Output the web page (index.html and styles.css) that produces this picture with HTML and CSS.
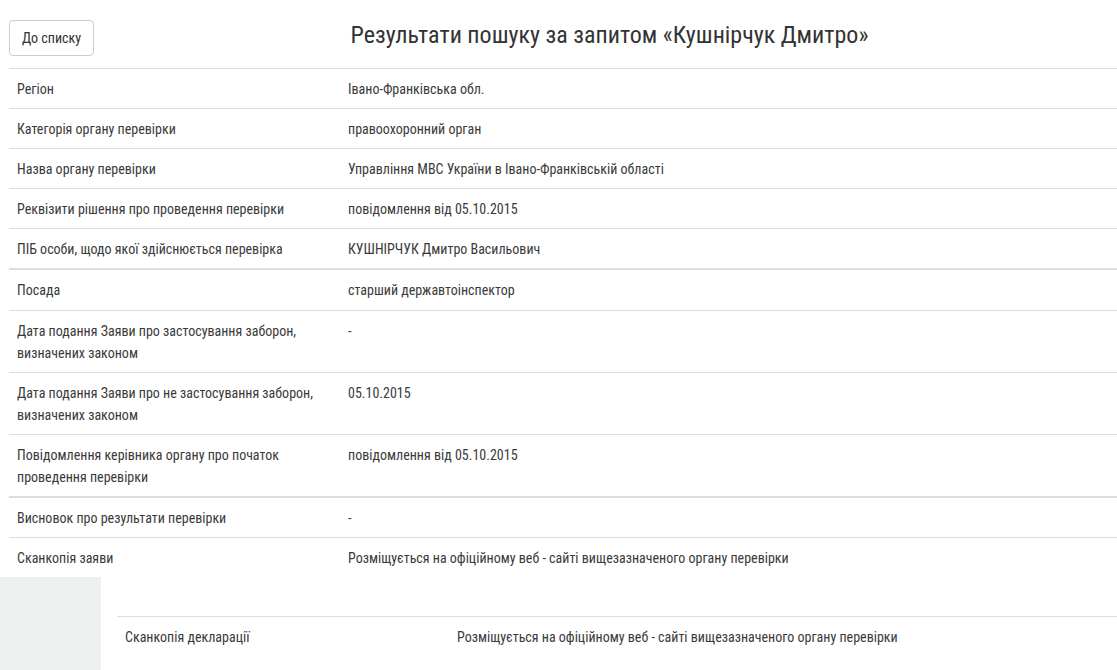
FILE: index.html
```html
<!DOCTYPE html>
<html lang="uk">
<head>
<meta charset="utf-8">
<title>Результати пошуку</title>
<link rel="stylesheet" href="styles.css">
</head>
<body>
<div class="page">
  <div class="header">
    <button class="btn">До списку</button>
    <h1 class="title">Результати пошуку за запитом «Кушнірчук Дмитро»</h1>
  </div>
  <table class="info">
    <tbody>
      <tr><td class="lbl">Регіон</td><td>Івано-Франківська обл.</td></tr>
      <tr><td class="lbl">Категорія органу перевірки</td><td>правоохоронний орган</td></tr>
      <tr><td class="lbl">Назва органу перевірки</td><td>Управління МВС України в Івано-Франківській області</td></tr>
      <tr><td class="lbl">Реквізити рішення про проведення перевірки</td><td>повідомлення від 05.10.2015</td></tr>
      <tr><td class="lbl">ПІБ особи, щодо якої здійснюється перевірка</td><td>КУШНІРЧУК Дмитро Васильович</td></tr>
    </tbody>
    <tbody>
      <tr><td class="lbl">Посада</td><td>старший державтоінспектор</td></tr>
      <tr><td class="lbl">Дата подання Заяви про застосування заборон, визначених законом</td><td>-</td></tr>
      <tr><td class="lbl">Дата подання Заяви про не застосування заборон, визначених законом</td><td>05.10.2015</td></tr>
      <tr><td class="lbl">Повідомлення керівника органу про початок проведення перевірки</td><td>повідомлення від 05.10.2015</td></tr>
    </tbody>
    <tbody>
      <tr><td class="lbl">Висновок про результати перевірки</td><td>-</td></tr>
      <tr><td class="lbl">Сканкопія заяви</td><td>Розміщується на офіційному веб - сайті вищезазначеного органу перевірки</td></tr>
    </tbody>
  </table>
  <div class="lower">
    <div class="side"></div>
    <div class="lower-main">
      <table class="info info2">
        <tbody>
          <tr><td class="lbl">Сканкопія декларації</td><td>Розміщується на офіційному веб - сайті вищезазначеного органу перевірки</td></tr>
        </tbody>
      </table>
    </div>
  </div>
</div>
</body>
</html>
```

FILE: styles.css
```css
html, body {
  margin: 0;
  padding: 0;
  background: #fff;
}
body {
  font-family: Roboto, "Liberation Sans", sans-serif;
  font-stretch: condensed;
  font-size: 14px;
  color: #3a3a3a;
  overflow: hidden;
}
.page {
  padding-left: 9px;
}
.header {
  display: flex;
  align-items: flex-start;
  padding-top: 20px;
  height: 48px;
}
.btn {
  font-family: inherit;
  font-stretch: condensed;
  font-size: 14px;
  color: #333;
  background: #fff;
  border: 1px solid #ccc;
  border-radius: 4px;
  width: 85px;
  height: 36px;
  padding: 0;
  cursor: pointer;
}
.title {
  flex: 1;
  margin: 0;
  padding: 1px 0 0 8px;
  text-align: center;
  font-weight: 400;
  font-size: 24px;
  line-height: 28px;
  color: #333;
}
.info {
  border-collapse: collapse;
  width: 1120px;
}
.info td {
  padding: 9px 8px 8px;
  line-height: 22.1px;
  border-top: 1px solid #ddd;
  vertical-align: top;
  text-align: left;
}
.info td.lbl {
  width: 315px;
}
.info tbody + tbody tr:first-child td {
  border-top: 2px solid #ddd;
}
.lower {
  display: flex;
  height: 100px;
}
.side {
  flex: 0 0 101px;
  margin-left: -9px;
  background: #eef0f0;
  height: 100px;
}
.lower-main {
  flex: 1;
  min-width: 0;
  padding-top: 39px;
  padding-left: 16px;
}
.info2 {
  width: 1010px;
}
.info2 td.lbl {
  width: 316px;
}
```
